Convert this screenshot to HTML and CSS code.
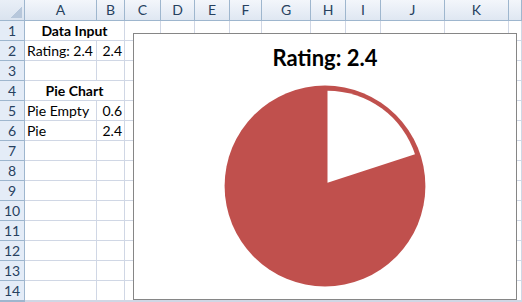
FILE: index.html
```html
<!DOCTYPE html>
<html lang="en">
<head>
  <meta charset="UTF-8">
  <title>Rating Pie Chart</title>
  <link rel="stylesheet" href="styles.css">
</head>
<body>

<div class="sheet">
  <div class="corner"></div>
  <div class="col-head">A</div><div class="col-head">B</div><div class="col-head">C</div><div class="col-head">D</div><div class="col-head">E</div><div class="col-head">F</div><div class="col-head">G</div><div class="col-head">H</div><div class="col-head">I</div><div class="col-head">J</div><div class="col-head">K</div><div class="col-head"></div>

  <div class="row-head">1</div><div class="cell bold merged">Data Input</div><div class="cell"></div><div class="cell"></div><div class="cell"></div><div class="cell"></div><div class="cell"></div><div class="cell"></div><div class="cell"></div><div class="cell"></div><div class="cell"></div><div class="cell"></div>
  <div class="row-head">2</div><div class="cell">Rating: 2.4</div><div class="cell num">2.4</div><div class="cell"></div><div class="cell"></div><div class="cell"></div><div class="cell"></div><div class="cell"></div><div class="cell"></div><div class="cell"></div><div class="cell"></div><div class="cell"></div><div class="cell"></div>
  <div class="row-head">3</div><div class="cell"></div><div class="cell"></div><div class="cell"></div><div class="cell"></div><div class="cell"></div><div class="cell"></div><div class="cell"></div><div class="cell"></div><div class="cell"></div><div class="cell"></div><div class="cell"></div><div class="cell"></div>
  <div class="row-head">4</div><div class="cell bold merged">Pie Chart</div><div class="cell"></div><div class="cell"></div><div class="cell"></div><div class="cell"></div><div class="cell"></div><div class="cell"></div><div class="cell"></div><div class="cell"></div><div class="cell"></div><div class="cell"></div>
  <div class="row-head">5</div><div class="cell">Pie Empty</div><div class="cell num">0.6</div><div class="cell"></div><div class="cell"></div><div class="cell"></div><div class="cell"></div><div class="cell"></div><div class="cell"></div><div class="cell"></div><div class="cell"></div><div class="cell"></div><div class="cell"></div>
  <div class="row-head">6</div><div class="cell">Pie</div><div class="cell num">2.4</div><div class="cell"></div><div class="cell"></div><div class="cell"></div><div class="cell"></div><div class="cell"></div><div class="cell"></div><div class="cell"></div><div class="cell"></div><div class="cell"></div><div class="cell"></div>
  <div class="row-head">7</div><div class="cell"></div><div class="cell"></div><div class="cell"></div><div class="cell"></div><div class="cell"></div><div class="cell"></div><div class="cell"></div><div class="cell"></div><div class="cell"></div><div class="cell"></div><div class="cell"></div><div class="cell"></div>
  <div class="row-head">8</div><div class="cell"></div><div class="cell"></div><div class="cell"></div><div class="cell"></div><div class="cell"></div><div class="cell"></div><div class="cell"></div><div class="cell"></div><div class="cell"></div><div class="cell"></div><div class="cell"></div><div class="cell"></div>
  <div class="row-head">9</div><div class="cell"></div><div class="cell"></div><div class="cell"></div><div class="cell"></div><div class="cell"></div><div class="cell"></div><div class="cell"></div><div class="cell"></div><div class="cell"></div><div class="cell"></div><div class="cell"></div><div class="cell"></div>
  <div class="row-head">10</div><div class="cell"></div><div class="cell"></div><div class="cell"></div><div class="cell"></div><div class="cell"></div><div class="cell"></div><div class="cell"></div><div class="cell"></div><div class="cell"></div><div class="cell"></div><div class="cell"></div><div class="cell"></div>
  <div class="row-head">11</div><div class="cell"></div><div class="cell"></div><div class="cell"></div><div class="cell"></div><div class="cell"></div><div class="cell"></div><div class="cell"></div><div class="cell"></div><div class="cell"></div><div class="cell"></div><div class="cell"></div><div class="cell"></div>
  <div class="row-head">12</div><div class="cell"></div><div class="cell"></div><div class="cell"></div><div class="cell"></div><div class="cell"></div><div class="cell"></div><div class="cell"></div><div class="cell"></div><div class="cell"></div><div class="cell"></div><div class="cell"></div><div class="cell"></div>
  <div class="row-head">13</div><div class="cell"></div><div class="cell"></div><div class="cell"></div><div class="cell"></div><div class="cell"></div><div class="cell"></div><div class="cell"></div><div class="cell"></div><div class="cell"></div><div class="cell"></div><div class="cell"></div><div class="cell"></div>
  <div class="row-head">14</div><div class="cell"></div><div class="cell"></div><div class="cell"></div><div class="cell"></div><div class="cell"></div><div class="cell"></div><div class="cell"></div><div class="cell"></div><div class="cell"></div><div class="cell"></div><div class="cell"></div><div class="cell"></div>
  <div class="row-head"></div><div class="cell"></div><div class="cell"></div><div class="cell"></div><div class="cell"></div><div class="cell"></div><div class="cell"></div><div class="cell"></div><div class="cell"></div><div class="cell"></div><div class="cell"></div><div class="cell"></div><div class="cell"></div>

  <!-- Gráfico sobre a planilha -->
  <div class="chart">
    <div class="chart-title">Rating: 2.4</div>
    <svg class="pie" width="210" height="210" viewBox="0 0 210 210">
      <circle cx="105" cy="105" r="100.4" fill="#c0504d"/>
      <path d="M107.5 101.7 L107.5 9.7 A92 92 0 0 1 195 73.3 Z" fill="#ffffff"/>
    </svg>
  </div>
</div>

</body>
</html>
```

FILE: styles.css
```css
body {
  margin: 0;
  overflow: hidden;
  background-color: #ffffff;
  font-family: Lato, "Open Sans", Arial, sans-serif;
  font-size: 14px;
  color: #000000;
}

.sheet {
  position: relative;
  width: 522px;
  height: 302px;
  overflow: hidden;
  display: grid;
  grid-template-columns: 25px 72px 28px 36px 34px 35px 32px 49px 35px 35px 64px 64px 1fr;
  grid-template-rows: 21px repeat(14, 20px) 1fr;
}

.corner,
.col-head,
.row-head,
.cell {
  box-sizing: border-box;
  overflow: hidden;
  white-space: nowrap;
}

.corner {
  border-right: 1px solid #9eb6ce;
  border-bottom: 1px solid #9eb6ce;
  background:
    linear-gradient(135deg, transparent 50%, #b7c7db 50%) no-repeat right 2px bottom 2px / 11px 11px,
    linear-gradient(#e9eff7, #dae3ef);
}

.col-head {
  text-align: center;
  line-height: 20px;
  color: #27415f;
  background: linear-gradient(#f3f6fb, #dfe7f2);
  border-right: 1px solid #9eb6ce;
  border-bottom: 1px solid #9eb6ce;
}

.row-head {
  text-align: center;
  line-height: 19px;
  color: #27415f;
  background-color: #e4ecf7;
  border-right: 1px solid #9eb6ce;
  border-bottom: 1px solid #9eb6ce;
}

.cell {
  line-height: 19px;
  padding: 0 2px;
  border-right: 1px solid #d0d7e5;
  border-bottom: 1px solid #d0d7e5;
}

.bold {
  font-weight: bold;
}

.merged {
  grid-column: span 2;
  text-align: center;
}

.num {
  text-align: right;
}

/* Gráfico */
.chart {
  position: absolute;
  left: 133px;
  top: 33px;
  width: 384px;
  height: 267px;
  box-sizing: border-box;
  border: 1px solid #868686;
  background-color: #ffffff;
  display: flex;
  flex-direction: column;
  align-items: center;
}

.chart-title {
  padding-top: 11px;
  font-size: 22px;
  font-weight: bold;
  line-height: 1.2;
}

.pie {
  display: block;
  margin-top: 10px;
}
```
